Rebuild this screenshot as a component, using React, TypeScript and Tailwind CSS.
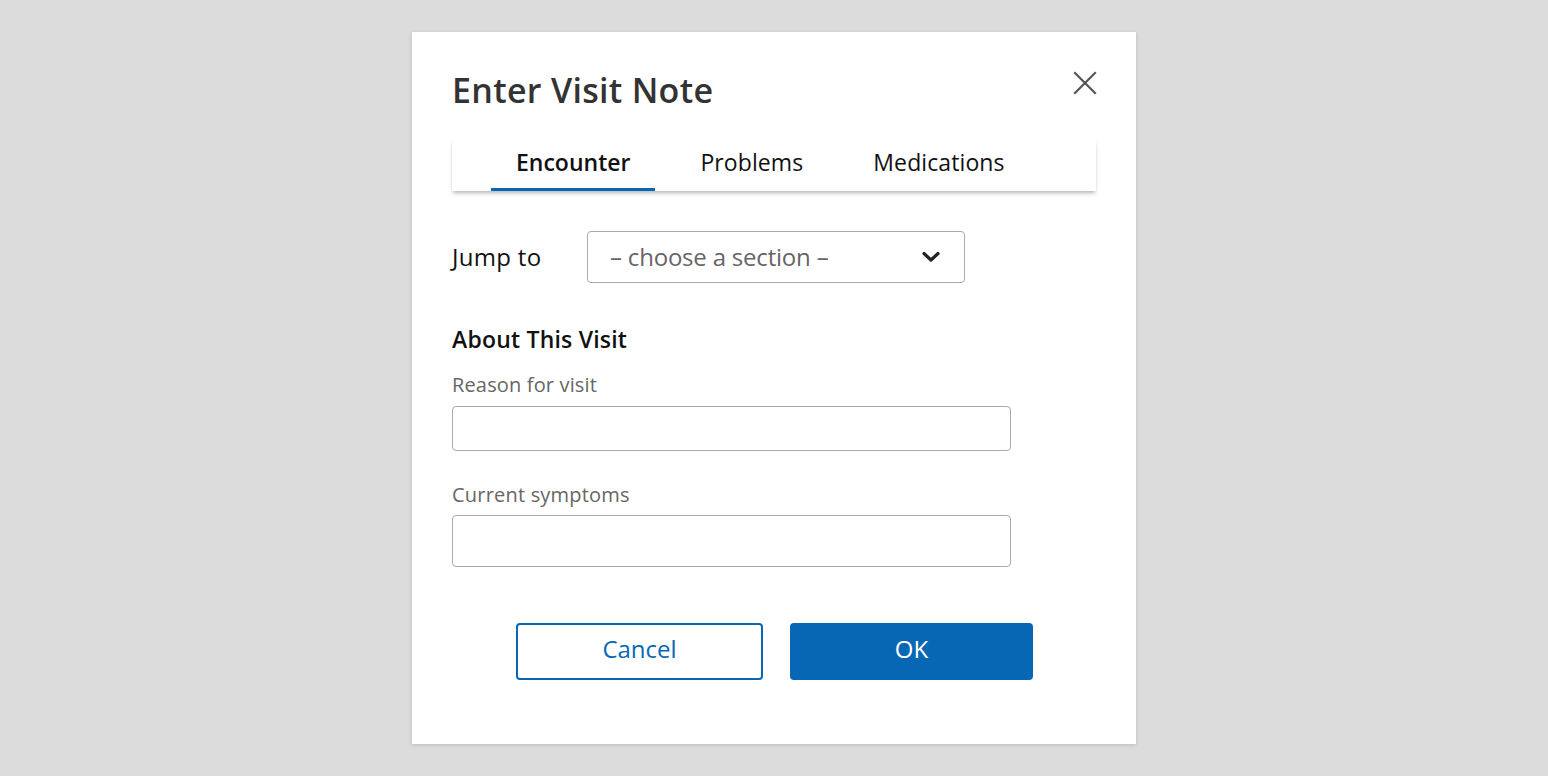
import React from "react";

export default function App() {
  const font = { fontFamily: '"Source Sans Pro", "Open Sans", sans-serif' };
  return (
    <div className="flex h-screen w-full items-center justify-center bg-[#dcdcdc]" style={font}>
      <div className="flex h-[712px] w-[724px] flex-col bg-white px-10 shadow-[0_1px_4px_rgba(0,0,0,0.15)]">
        <div className="flex items-start justify-between pt-[36px]">
          <h1 className="text-[34px] font-semibold leading-[44px] tracking-[0.3px] text-[#333]">Enter Visit Note</h1>
          <button className="mr-[-1px] mt-[3px] flex h-[24px] w-[24px] items-center justify-center" aria-label="Close">
            <svg width="24" height="24" viewBox="0 0 24 24" fill="none" stroke="#555" strokeWidth="2.2" strokeLinecap="square">
              <path d="M2 2 L22 22 M22 2 L2 22" />
            </svg>
          </button>
        </div>

        <div className="mt-[28px] flex h-[51px] items-end bg-white pl-[39px] shadow-[0_3px_4px_-1px_rgba(0,0,0,0.3)]">
          <div className="flex gap-[20px]">
            <div className="flex h-[51px] flex-col justify-between">
              <span className="px-[25px] pt-[8px] text-[23px] font-semibold leading-[28px] text-[#111]">Encounter</span>
              <div className="h-[3px] bg-[#0767b5]" />
            </div>
            <div className="flex h-[51px] flex-col">
              <span className="px-[25px] pt-[8px] text-[23px] leading-[28px] tracking-[0.1px] text-[#111]">Problems</span>
            </div>
            <div className="flex h-[51px] flex-col">
              <span className="px-[25px] pt-[8px] text-[23px] leading-[28px] tracking-[0.1px] text-[#111]">Medications</span>
            </div>
          </div>
        </div>

        <div className="mt-[40px] flex items-center">
          <span className="w-[135px] text-[24px] leading-[30px] tracking-[0.3px] text-[#111]">Jump to</span>
          <div className="flex h-[52px] w-[378px] items-center justify-between rounded-[4px] border border-[#aaa] pl-[22px] pr-[23px]">
            <span className="text-[24px] leading-[30px] tracking-[-0.2px] text-[#666]">– choose a section –</span>
            <svg width="20" height="14" viewBox="0 0 20 14" fill="none" stroke="#222" strokeWidth="3.2" strokeLinecap="round" strokeLinejoin="round">
              <path d="M3 3.5 L10 10 L17 3.5" />
            </svg>
          </div>
        </div>

        <h2 className="mt-[41px] text-[23px] font-semibold leading-[30px] tracking-[0.2px] text-[#111]">About This Visit</h2>

        <label className="mt-[18px] text-[20px] leading-[26px] tracking-[0.15px] text-[#666]">Reason for visit</label>
        <input className="mt-[8px] h-[45px] w-[559px] rounded-[4px] border border-[#aaa] px-3 text-[20px] outline-none" />

        <label className="mt-[31px] text-[20px] leading-[26px] tracking-[0.2px] text-[#666]">Current symptoms</label>
        <input className="mt-[7px] h-[52px] w-[559px] rounded-[4px] border border-[#aaa] px-3 text-[20px] outline-none" />

        <div className="mt-[56px] flex gap-[27px] pl-[64px]">
          <button className="h-[57px] w-[247px] rounded-[4px] border-2 border-[#0767b5] bg-white pb-[6px] text-[24px] text-[#0767b5]">Cancel</button>
          <button className="h-[57px] w-[243px] rounded-[4px] bg-[#0767b5] pb-[6px] text-[24px] text-white">OK</button>
        </div>
      </div>
    </div>
  );
}
